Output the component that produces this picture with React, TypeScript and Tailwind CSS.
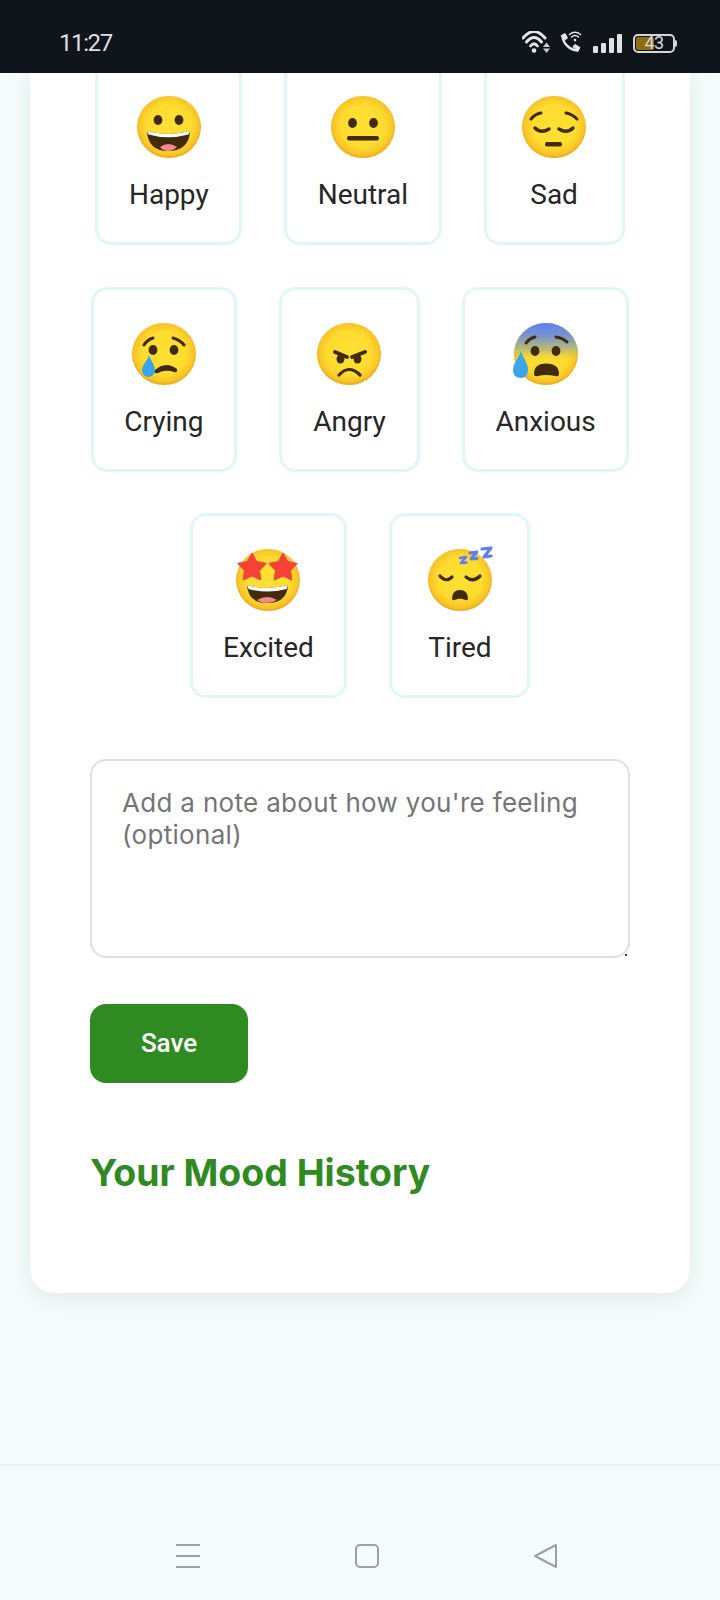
import React from "react";

const FONT_ROBOTO = "font-['Roboto',sans-serif]";

function Face({ id, anxious, children }: { id: string; anxious?: boolean; children?: React.ReactNode }) {
  return (
    <svg viewBox="0 0 64 62" className="block w-16 h-[62px] overflow-visible">
      <defs>
        <radialGradient id={id} cx="50%" cy="48%" r="52%">
          <stop offset="0%" stopColor="#fee133" />
          <stop offset="65%" stopColor="#fedc30" />
          <stop offset="90%" stopColor="#f9c526" />
          <stop offset="100%" stopColor="#eba51b" />
        </radialGradient>
        {anxious && (
          <linearGradient id={id + "b"} x1="0" y1="0" x2="0" y2="1">
            <stop offset="0%" stopColor="#5b80f5" />
            <stop offset="22%" stopColor="#7b96c8" />
            <stop offset="42%" stopColor="#b8bb72" />
            <stop offset="62%" stopColor="#f3cf33" stopOpacity="0" />
          </linearGradient>
        )}
      </defs>
      <ellipse cx="32" cy="31" rx="32" ry="31" fill={`url(#${id})`} />
      {anxious && <ellipse cx="32" cy="31" rx="32" ry="31" fill={`url(#${id}b)`} />}
      {children}
    </svg>
  );
}

const DARK = "#422b0d";
const Eye = ({ x, y, r = 4.4 }: { x: number; y: number; r?: number }) => <ellipse cx={x} cy={y} rx={r} ry={r + 0.6} fill={DARK} />;
const Line = ({ d, w = 2.6 }: { d: string; w?: number }) => (
  <path d={d} fill="none" stroke={DARK} strokeWidth={w} strokeLinecap="round" />
);
const Tear = ({ d }: { d: string }) => <path d={d} fill="#3aa6e8" />;

const emojis: Record<string, React.ReactNode> = {
  Happy: (
    <Face id="f1">
      <Eye x={21} y={24} />
      <Eye x={42} y={24} />
      <path d="M10 35 Q31 41 53 35 Q52 55 31 55 Q11 55 10 35Z" fill={DARK} />
      <path d="M10 35 Q31 41 53 35 L51.5 38.5 Q31 44 11.5 38.5Z" fill="#fff" />
      <path d="M23 51 Q31 45 40 51 Q36 55 31 55 Q26 55 23 51Z" fill="#f08a8f" />
    </Face>
  ),
  Neutral: (
    <Face id="f2">
      <Eye x={21.5} y={27} />
      <Eye x={42.5} y={27} />
      <rect x="16" y="40" width="32" height="4.5" rx="2" fill={DARK} />
    </Face>
  ),
  Sad: (
    <Face id="f3">
      <Line d="M9 23 Q13 18 19 17" w={3} />
      <Line d="M44 17 Q50 18 55 23" w={3} />
      <Line d="M13 32 Q19 38 27 33" w={3.4} />
      <Line d="M37 33 Q45 38 51 32" w={3.4} />
      <rect x="23" y="46" width="17" height="4.5" rx="2" fill={DARK} />
    </Face>
  ),
  Crying: (
    <Face id="f4">
      <Line d="M12 22 Q15 17 21 15" w={3} />
      <Line d="M41 15 Q48 17 52 22" w={3} />
      <Eye x={21} y={27} />
      <Eye x={42} y={27} />
      <path d="M22 48 Q33 37 45 46 Q46 50 42 49 Q33 46 26 50 Q22 51 22 48Z" fill={DARK} />
      <Tear d="M17 32 C19 38 23 42 23 47 C23 51 20 54 17 54 C13 54 10 51 10 47 C10 42 15 38 17 32Z" />
    </Face>
  ),
  Angry: (
    <Face id="f5">
      <Line d="M18 29 L30 34" w={3.8} />
      <Line d="M48 29 L35 34" w={3.8} />
      <Eye x={23.5} y={36} r={4} />
      <Eye x={40.5} y={36} r={4} />
      <Line d="M22 52 Q32 41 43 52" w={3.2} />
    </Face>
  ),
  Anxious: (
    <Face id="f6" anxious>
      <Line d="M12 20 Q16 15 21 14" w={3} />
      <Line d="M42 14 Q49 15 53 19" w={3} />
      <Eye x={21} y={28} />
      <Eye x={42} y={28} />
      <path d="M20 51 Q20 40.5 32 40.5 Q45 40.5 45 51 Q45 54 41 53 Q32 51 24 53 Q20 54 20 51Z" fill={DARK} />
      <Tear d="M7 28 C9 35 14 40 14 47 C14 52 11 55 7 55 C2 55 -1 52 -1 47 C-1 40 5 35 7 28Z" />
    </Face>
  ),
  Excited: (
    <Face id="f7">
      <path d="M11 36 Q31 42 52 36 Q51 54 31 54 Q12 54 11 36Z" fill={DARK} />
      <path d="M11 36 Q31 42 52 36 L50.5 40 Q31 45 12.5 40Z" fill="#fff" />
      <path d="M21 51 Q31 45 41 51 Q36 54 31 54 Q25 54 21 51Z" fill="#f08a8f" />
      <path d="M16 4 L20.7 12.5 L30.3 14.4 L23.6 21.5 L24.8 31.1 L16 27 L7.2 31.1 L8.4 21.5 L1.7 14.4 L11.3 12.5Z" fill="#f44336" stroke="#f44336" strokeWidth="1" strokeLinejoin="round" />
      <path d="M47 4 L51.7 12.5 L61.3 14.4 L54.6 21.5 L55.8 31.1 L47 27 L38.2 31.1 L39.4 21.5 L32.7 14.4 L42.3 12.5Z" fill="#f44336" stroke="#f44336" strokeWidth="1" strokeLinejoin="round" />
    </Face>
  ),
  Tired: (
    <Face id="f8">
      <Line d="M12 27 Q18 34 24 28" w={3.2} />
      <Line d="M38 28 Q45 34 52 27" w={3.2} />
      <path d="M24 50 Q24 41 32 41 Q40 41 40 50 Q40 52 36 50.5 Q32 49 28 50.5 Q24 52 24 50Z" fill={DARK} />
      <path d="M32 9 L38 8 L33 14 L38.5 13.5" fill="none" stroke="#5b7ff0" strokeWidth="2.6" strokeLinejoin="round" strokeLinecap="round" />
      <path d="M42 4 L49 3 L43 10 L49 9.5" fill="none" stroke="#5b7ff0" strokeWidth="2.9" strokeLinejoin="round" strokeLinecap="round" />
      <path d="M54 0 L63 -1 L56 8 L63 7" fill="none" stroke="#5b7ff0" strokeWidth="3.2" strokeLinejoin="round" strokeLinecap="round" />
    </Face>
  ),
};

const moods = ["Happy", "Neutral", "Sad", "Crying", "Angry", "Anxious", "Excited", "Tired"];

function MoodCard({ name }: { name: string }) {
  return (
    <div className="flex flex-col items-center border-[3px] border-[#e0f7fa] rounded-[16px] bg-white h-[185px] min-w-[141px] px-[30.5px] pt-[33px]">
      {emojis[name]}
      <span className={`${FONT_ROBOTO} mt-[22px] text-[28px] leading-[30px] text-[#262626]`}>{name}</span>
    </div>
  );
}

function StatusIcons() {
  return (
    <div className="ml-auto mr-[43px] mt-[10px] flex items-end gap-[10px] h-[22px]">
      <svg width="28" height="22" viewBox="0 0 28 22" fill="none" stroke="#e4e6e8" strokeLinecap="round">
        <path d="M1 7 Q12 -6 23 7" strokeWidth="3" />
        <path d="M4.5 11 Q12 2 19.5 11" strokeWidth="3" />
        <path d="M8.5 15 Q12 10.5 15.5 15" strokeWidth="2.8" />
        <circle cx="12" cy="19.5" r="2.3" fill="#e4e6e8" stroke="none" />
        <path d="M24.5 11.5 L28 16 H21Z" fill="#c8cacc" stroke="none" />
        <path d="M24.5 22 L28 17.5 H21Z" fill="#c8cacc" stroke="none" />
      </svg>
      <svg width="22" height="22" viewBox="0 0 22 22" fill="none" stroke="#e4e6e8" strokeLinecap="round">
        <path d="M2.5 5 C3 12 9 19 17.5 19.5" strokeWidth="2.4" />
        <path d="M1.5 4.5 L5 2.5 L7.5 7 L5 9Z" fill="#e4e6e8" strokeWidth="1" strokeLinejoin="round" />
        <path d="M13 15.5 L15 13.5 L20 16.5 L18 20Z" fill="#e4e6e8" strokeWidth="1" strokeLinejoin="round" />
        <path d="M9.5 3.5 Q15 -1 20.5 3.5" strokeWidth="1.5" />
        <path d="M11.5 6 Q15 3 18.5 6" strokeWidth="1.5" />
        <circle cx="15" cy="9" r="1.3" fill="#e4e6e8" stroke="none" />
      </svg>
      <div className="flex items-end gap-[3px] ml-[1px]">
        <div className="w-[5px] h-[7px] rounded-[1px] bg-[#dfe1e3]" />
        <div className="w-[5px] h-[10px] rounded-[1px] bg-[#dfe1e3]" />
        <div className="w-[5px] h-[15px] rounded-[1px] bg-[#dfe1e3]" />
        <div className="w-[5px] h-[19px] rounded-[1px] bg-[#dfe1e3]" />
      </div>
      <div className="flex items-center ml-[1px]">
        <div className="relative w-[42px] h-[19px] rounded-[5px] border-2 border-[#d4d6d8] flex items-center justify-center overflow-hidden">
          <div className="absolute left-[1px] top-[1px] bottom-[1px] w-[18px] rounded-[2px] bg-[#8f6c10]" />
          <span className={`${FONT_ROBOTO} relative text-[18px] leading-none tracking-[-0.5px] text-[#d8d8d8]`}>43</span>
        </div>
        <div className="w-[2px] h-[7px] rounded-r-[2px] bg-[#d4d6d8]" />
      </div>
    </div>
  );
}

export default function App() {
  return (
    <div className="h-[1600px] w-[720px] overflow-hidden flex flex-col bg-[#f4fdfc]">
      <header className="relative z-10 h-[73px] shrink-0 bg-[#10151b] flex items-center">
        <span className={`${FONT_ROBOTO} pl-[59px] mt-[12px] text-[24px] leading-none tracking-[-1.4px] text-[#dcdee0]`}>11:27</span>
        <StatusIcons />
      </header>

      <main className="flex-1 px-[30px]">
        <section className="h-[1233px] bg-white rounded-b-[24px] shadow-[0_6px_24px_rgba(0,0,0,0.08)] px-[60px]">
          <div className="-mt-[13px] flex flex-wrap justify-center gap-x-[42px] gap-y-[41.5px]">
            {moods.map((m) => (
              <MoodCard key={m} name={m} />
            ))}
          </div>
          <div className="relative mt-[61px]">
            <textarea
              readOnly
              placeholder="Add a note about how you're feeling (optional)"
              className="block w-full h-[199px] resize-none border-2 border-[#e0e0e0] rounded-[16px] pl-[30px] pr-[30px] pt-[26px] font-['Inter',sans-serif] text-[26px] leading-[32px] tracking-[0.32px] text-[#222222] placeholder:text-[#757575] outline-none"
            />
            <div className="absolute right-[3px] bottom-[2px] w-[2px] h-[2px] bg-[#444444]" />
          </div>
          <button className={`${FONT_ROBOTO} mt-[46px] block w-[158px] h-[79px] rounded-[16px] bg-[#2f8a22] text-white text-[26px] font-medium`}>
            Save
          </button>
          <h2 className="mt-[68px] font-['Inter',sans-serif] font-bold text-[37.4px] leading-[44px] text-[#2f8a22]">
            Your Mood History
          </h2>
        </section>
      </main>

      <footer className="h-[136px] shrink-0 border-t-2 border-[#e8f3f3] flex items-start pl-[176px] pt-[78px] gap-[155px]">
        <div className="w-6 h-6 flex flex-col justify-between">
          <div className="h-[2px] bg-[#98a2a2]" />
          <div className="h-[2px] bg-[#98a2a2]" />
          <div className="h-[2px] bg-[#98a2a2]" />
        </div>
        <div className="w-6 h-6 rounded-[5px] border-2 border-[#98a2a2]" />
        <svg width="24" height="24" viewBox="0 0 24 24" fill="none" stroke="#98a2a2" strokeWidth="2" strokeLinejoin="round">
          <path d="M22 1 V23 L1 12Z" />
        </svg>
      </footer>
    </div>
  );
}
